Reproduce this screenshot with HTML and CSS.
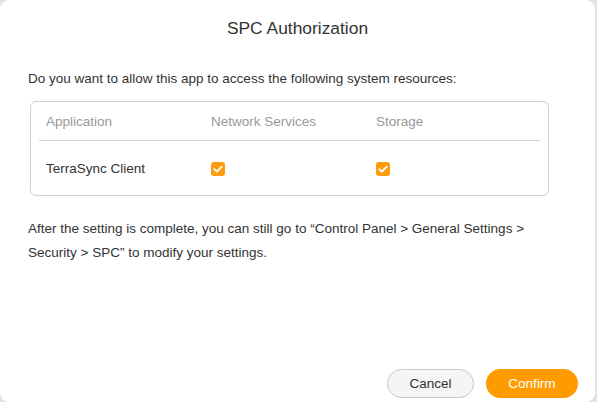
FILE: index.html
```html
<!DOCTYPE html>
<html>
<head>
<meta charset="utf-8">
<link rel="stylesheet" href="styles.css">
</head>
<body>
<div class="dialog">
  <h1 class="title">SPC Authorization</h1>
  <p class="intro">Do you want to allow this app to access the following system resources:</p>
  <div class="table">
    <div class="row head">
      <div class="c1">Application</div>
      <div class="c2">Network Services</div>
      <div class="c3">Storage</div>
    </div>
    <div class="row body">
      <div class="c1">TerraSync Client</div>
      <div class="c2"><span class="check"><svg viewBox="0 0 14 14" width="14" height="14"><path d="M3.3 7.2 L5.9 9.7 L10.8 4.6" fill="none" stroke="#fff" stroke-width="1.8" stroke-linecap="round" stroke-linejoin="round"/></svg></span></div>
      <div class="c3"><span class="check"><svg viewBox="0 0 14 14" width="14" height="14"><path d="M3.3 7.2 L5.9 9.7 L10.8 4.6" fill="none" stroke="#fff" stroke-width="1.8" stroke-linecap="round" stroke-linejoin="round"/></svg></span></div>
    </div>
  </div>
  <p class="note">After the setting is complete, you can still go to “Control Panel &gt; General Settings &gt; Security &gt; SPC” to modify your settings.</p>
  <div class="spacer"></div>
  <div class="actions">
    <button class="btn cancel">Cancel</button>
    <button class="btn confirm">Confirm</button>
  </div>
</div>
</body>
</html>
```

FILE: styles.css
```css
html, body {
  margin: 0;
  padding: 0;
  background: #e2e2e2;
  height: 100%;
}
body {
  font-family: "Liberation Sans", Arial, sans-serif;
  color: #333;
}
.dialog {
  box-sizing: border-box;
  width: 595px;
  height: 402px;
  background: #fff;
  border-radius: 9px;
  display: flex;
  flex-direction: column;
  padding: 0 17px 0 28px;
}
.title {
  margin: 18px -17px 0 -28px;
  font-size: 17.4px;
  font-weight: normal;
  text-align: center;
  line-height: 20px;
  color: #333;
}
.intro {
  margin: 31px 0 0;
  font-size: 13.5px;
  line-height: 20px;
}
.table {
  margin: 12px 0 0 2px;
  width: 519px;
  box-sizing: border-box;
  height: 95px;
  border: 1px solid #cfcfcf;
  border-radius: 6px;
  padding: 0 8px;
}
.row {
  display: flex;
  align-items: center;
  font-size: 13.5px;
}
.row.head {
  height: 38px;
  border-bottom: 1px solid #d6d6d6;
  color: #999;
}
.row.body {
  height: 55px;
}
.c1 {
  width: 165px;
  padding-left: 7px;
}
.c2 {
  width: 165px;
}
.check {
  display: block;
  width: 14px;
  height: 14px;
  background: #fb9d0e;
  border-radius: 3px;
}
.check svg { display: block; }
.note {
  margin: 21px 0 0;
  max-width: 515px;
  font-size: 13.5px;
  line-height: 24px;
}
.spacer { flex: 1; }
.actions {
  display: flex;
  justify-content: flex-end;
  gap: 12px;
  margin-bottom: 4px;
}
.btn {
  font-family: "Liberation Sans", Arial, sans-serif;
  font-size: 13.5px;
  height: 29px;
  border-radius: 15px;
  cursor: pointer;
}
.cancel {
  width: 87px;
  background: #f5f5f5;
  border: 1px solid #c8c8c8;
  color: #333;
}
.confirm {
  width: 92px;
  background: #fe9b00;
  border: none;
  color: #fff;
}
```
